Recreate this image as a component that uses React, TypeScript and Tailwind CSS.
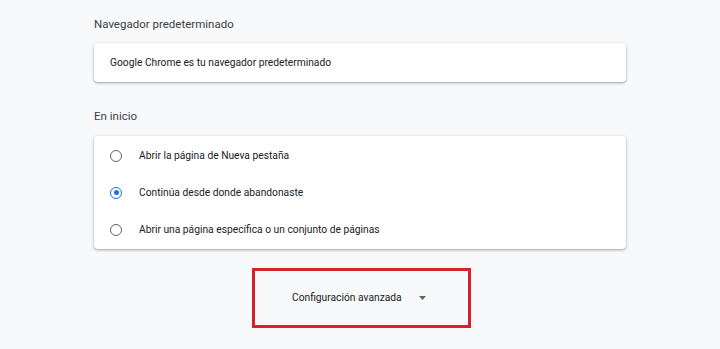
import React from 'react';

const options = [
  'Abrir la página de Nueva pestaña',
  'Continúa desde donde abandonaste',
  'Abrir una página específica o un conjunto de páginas',
];

const Radio: React.FC<{ checked: boolean }> = ({ checked }) => (
  <span
    className={`flex h-[12px] w-[12px] items-center justify-center rounded-full border-[1.5px] ${
      checked ? 'border-[#1a73e8]' : 'border-[#5f6368]'
    }`}
  >
    {checked && <span className="h-[5px] w-[5px] rounded-full bg-[#1a73e8]" />}
  </span>
);

export default function App() {
  const selected = 1;

  return (
    <div className="h-[349px] w-full overflow-hidden bg-[#f8f9fa] font-['Roboto','Liberation_Sans',sans-serif]">
      <div className="mx-auto w-[532px] pt-[15px]">
        <h2 className="mb-[10px] h-[18px] text-[11.5px] leading-[18px] text-[#3c4043]">
          Navegador predeterminado
        </h2>
        <div className="flex h-[39px] items-center rounded-[4px] bg-white px-[16px] text-[10.25px] text-[#202124] shadow-[0_1px_2px_rgba(60,64,67,0.3),0_1px_3px_1px_rgba(60,64,67,0.15)]">
          Google Chrome es tu navegador predeterminado
        </div>

        <h2 className="mb-[11px] mt-[25px] h-[18px] text-[11.5px] leading-[18px] text-[#3c4043]">
          En inicio
        </h2>
        <div className="flex flex-col rounded-[4px] bg-white py-[1px] shadow-[0_1px_2px_rgba(60,64,67,0.3),0_1px_3px_1px_rgba(60,64,67,0.15)]">
          {options.map((label, i) => (
            <div key={label} className="flex h-[37px] items-center gap-[17px] pl-[16px] text-[10.25px] text-[#202124]">
              <Radio checked={i === selected} />
              <span>{label}</span>
            </div>
          ))}
        </div>

        <div className="mt-[19px] flex justify-center">
          <div className="ml-[3px] flex h-[60px] w-[219px] items-center gap-[17px] border-[3px] border-[#d4222f] pl-[37px]">
            <span className="text-[10.25px] text-[#202124]">Configuración avanzada</span>
            <svg width="7" height="4" viewBox="0 0 7 4" className="text-[#5f6368]">
              <path d="M0 0 L7 0 L3.5 4 Z" fill="currentColor" />
            </svg>
          </div>
        </div>
      </div>
    </div>
  );
}
